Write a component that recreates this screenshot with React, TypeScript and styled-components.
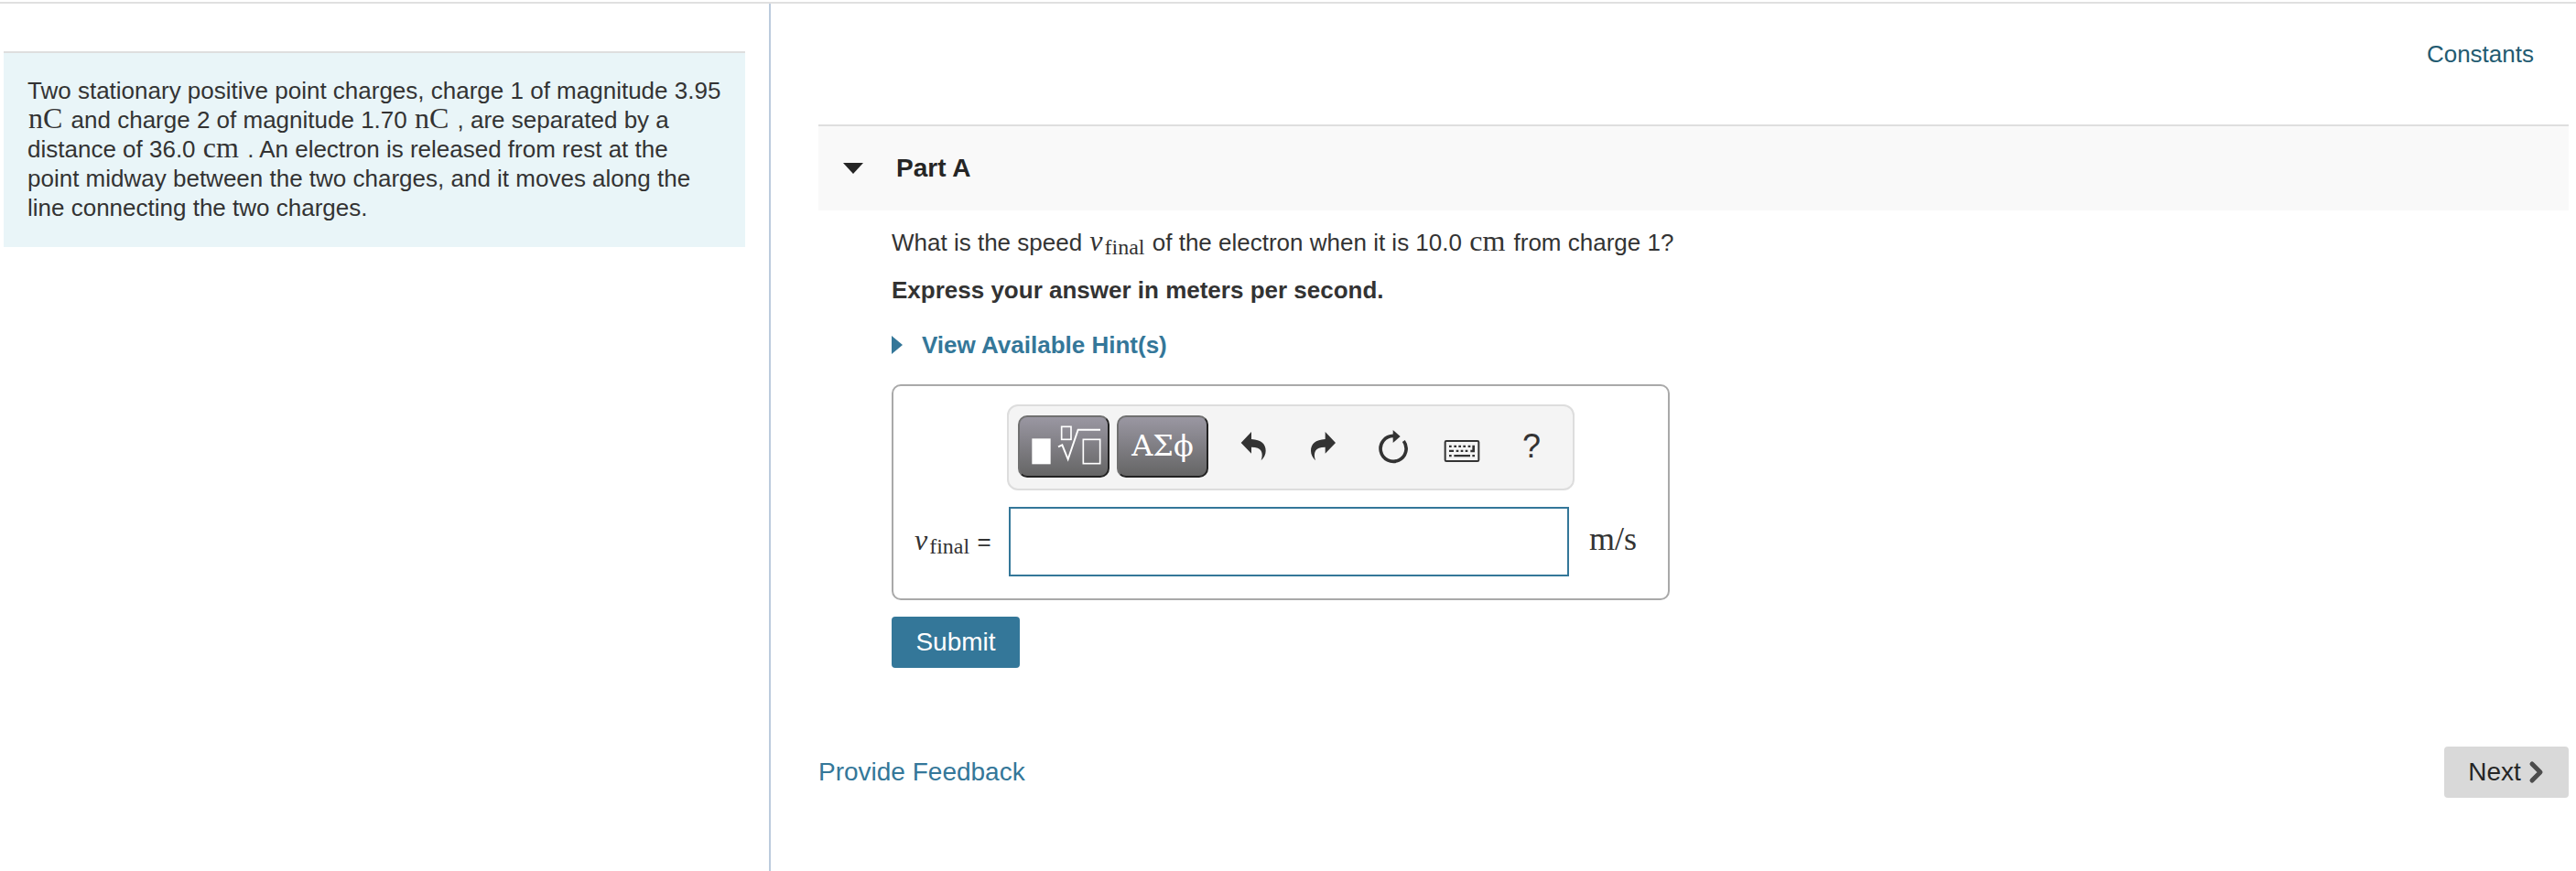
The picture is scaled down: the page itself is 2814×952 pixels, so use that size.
import React from "react";
import styled, { createGlobalStyle } from "styled-components";

const GlobalStyle = createGlobalStyle`
  *, *::before, *::after { box-sizing: border-box; }
  body {
    margin: 0;
    background: #fff;
    color: #333;
    font: 26px/32px "Liberation Sans", Arial, sans-serif;
  }
  p, h2 { margin: 0; }
  button, input { font: inherit; color: inherit; }
`;

const Page = styled.div`
  display: flex;
  min-height: 100vh;
  padding-top: 2px;
`;

const Shell = styled.div`
  display: flex;
  flex: 1;
  border-top: 2px solid #e0e0e0;
`;

const Sidebar = styled.aside`
  flex: 0 0 842px;
  padding: 52px 26px 0 4px;
  border-right: 2px solid #bccbdd;
`;

const Problem = styled.section`
  padding: 25px 24px 27px 26px;
  min-height: 214px;
  border-top: 2px solid #dedede;
  background: #e9f5f8;
`;

const Unit = styled.span<{ $size?: number }>`
  padding: 0 2px 0 1px;
  font-family: "Liberation Serif", "Times New Roman", serif;
  font-size: ${(p) => p.$size ?? 32}px;
  line-height: 24px;
`;

const Variable = styled(Unit)`
  padding: 0 1px;
  sub {
    margin-left: 2px;
    font-size: 24px;
    line-height: 16px;
    vertical-align: -4px;
  }
`;

const Main = styled.main`
  flex: 1;
  min-width: 0;
  padding: 39px 8px 0 52px;
`;

const TopBar = styled.nav`
  display: flex;
  justify-content: flex-end;
  padding: 0 38px 61px 0;
`;

const Link = styled.a<{ $size?: number; $dark?: boolean }>`
  font-size: ${(p) => p.$size ?? 26}px;
  color: ${(p) => (p.$dark ? "#235b71" : "#347799")};
  text-decoration: none;
`;

const PartHeader = styled.header`
  display: flex;
  align-items: center;
  height: 94px;
  border-top: 2px solid #dedede;
  background: #f9f9f9;
`;

const PartToggle = styled.button`
  display: flex;
  align-items: center;
  gap: 36px;
  padding: 0 27px;
  border: 0;
  background: none;
  color: #252525;
  font-size: 28px;
  font-weight: bold;
`;

const PartBody = styled.div`
  padding: 19px 0 0 80px;
`;

const Question = styled.p`
  margin-bottom: 20px;
`;

const Instruction = styled.p`
  margin-bottom: 28px;
  font-weight: bold;
`;

const HintToggle = styled.button`
  display: flex;
  align-items: center;
  gap: 21px;
  margin-bottom: 27px;
  padding: 0;
  border: 0;
  background: none;
  color: #347799;
  font-weight: bold;
`;

const AnswerBox = styled.form`
  display: grid;
  grid-template-columns: 104px 612px auto;
  align-items: center;
  row-gap: 18px;
  width: 850px;
  padding: 20px 20px 24px 22px;
  border: 2px solid #a9a9a9;
  border-radius: 10px;
`;

const Toolbar = styled.div`
  grid-column: 2 / 4;
  justify-self: start;
  display: flex;
  align-items: center;
  width: 620px;
  height: 94px;
  margin-left: -2px;
  padding: 0 0 2px 10px;
  border: 2px solid #ddd;
  border-radius: 12px;
  background: #f4f4f4;
`;

const PaletteButton = styled.button`
  display: flex;
  flex: none;
  align-items: center;
  justify-content: center;
  width: 100px;
  height: 68px;
  margin-right: 8px;
  padding: 0 0 2px;
  border: 2px solid;
  border-color: #707070 #222 #222 #707070;
  border-radius: 10px;
  background: linear-gradient(#9a97a2, #656565);
  color: #fff;
  font-family: "DejaVu Serif", serif;
  font-size: 32px;
`;

const IconGroup = styled.div`
  display: flex;
  padding-left: 3px;
`;

const IconButton = styled.button`
  display: flex;
  flex: none;
  align-items: center;
  justify-content: center;
  width: 76px;
  height: 68px;
  padding: 0;
  border: 0;
  background: none;
  color: #333;
  font-size: 36px;
`;

const AnswerLabel = styled.label`
  white-space: nowrap;
`;

const AnswerInput = styled.input`
  width: 612px;
  height: 76px;
  padding: 0 12px;
  border: 2px solid #347799;
  border-radius: 0;
  background: #fff;
  outline: 0;
`;

const UnitSuffix = styled.div`
  padding-left: 21px;
`;

const SubmitButton = styled.button`
  display: block;
  width: 140px;
  height: 56px;
  margin-top: 18px;
  padding: 0;
  border: 0;
  border-radius: 4px;
  background: #347799;
  color: #fff;
  font-size: 28px;
`;

const Footer = styled.footer`
  display: flex;
  align-items: center;
  justify-content: space-between;
  padding-top: 86px;
`;

const NextButton = styled.button`
  display: flex;
  align-items: center;
  justify-content: center;
  gap: 8px;
  width: 136px;
  height: 56px;
  padding: 0;
  border: 0;
  border-radius: 4px;
  background: #d9d9d9;
  color: #252525;
  font-size: 28px;
`;

const Icon = ({ children }: { children: React.ReactNode }) => (
  <svg width="40" height="40" viewBox="0 0 120 120" fill="currentColor" aria-hidden="true">
    {children}
  </svg>
);

const UNDO_PATH =
  "M20 48 L54 12 V36 C86 38 101 52 101 74 C101 86 95 97 86 106 C94 80 88 62 54 62 V83 Z";

const TemplateIcon = () => (
  <svg width="82" height="44" viewBox="0 0 246 132" fill="none" stroke="#fff" strokeWidth="5" aria-hidden="true">
    <rect x="19" y="43" width="61" height="84" fill="#fff" stroke="none" />
    <rect x="116" y="4" width="31" height="42" />
    <path d="M105 70 L118 64 L137 111 L170 14 H243" strokeWidth="6" />
    <rect x="187" y="46" width="55" height="79" />
  </svg>
);

const VFinal = () => (
  <Variable>
    <i>v</i>
    <sub>final</sub>
  </Variable>
);

export default function App() {
  return (
    <>
      <GlobalStyle />
      <Page>
        <Shell>
          <Sidebar>
            <Problem>
              <p>
                Two stationary positive point charges, charge 1 of magnitude 3.95{" "}
                <Unit>nC</Unit> and charge 2 of magnitude 1.70 <Unit>nC</Unit> , are separated by a
                distance of 36.0 <Unit>cm</Unit> . An electron is released from rest at the point
                midway between the two charges, and it moves along the line connecting the two
                charges.
              </p>
            </Problem>
          </Sidebar>
          <Main>
            <TopBar>
              <Link href="#constants" $dark>Constants</Link>
            </TopBar>
            <PartHeader>
              <h2>
                <PartToggle type="button" aria-expanded="true">
                  <svg width="22" height="12" viewBox="0 0 22 12" fill="currentColor" aria-hidden="true">
                    <path d="M0 0 H22 L11 12 Z" />
                  </svg>
                  Part A
                </PartToggle>
              </h2>
            </PartHeader>
            <PartBody>
              <Question>
                What is the speed <VFinal /> of the electron when it is 10.0 <Unit>cm</Unit> from
                charge 1?
              </Question>
              <Instruction>Express your answer in meters per second.</Instruction>
              <HintToggle type="button" aria-expanded="false">
                <svg width="12" height="20" viewBox="0 0 12 20" fill="currentColor" aria-hidden="true">
                  <path d="M0 0 L12 10 L0 20 Z" />
                </svg>
                View Available Hint(s)
              </HintToggle>
              <AnswerBox id="answer-form" onSubmit={(e) => e.preventDefault()}>
                <Toolbar role="toolbar" aria-label="Equation editor">
                  <PaletteButton type="button" aria-label="Templates">
                    <TemplateIcon />
                  </PaletteButton>
                  <PaletteButton type="button">ΑΣϕ</PaletteButton>
                  <IconGroup>
                    <IconButton type="button" aria-label="Undo">
                      <Icon><path d={UNDO_PATH} /></Icon>
                    </IconButton>
                    <IconButton type="button" aria-label="Redo">
                      <Icon><path d={UNDO_PATH} transform="translate(122 0) scale(-1 1)" /></Icon>
                    </IconButton>
                    <IconButton type="button" aria-label="Reset">
                      <Icon>
                        <path d="M97 42 A42 42 0 1 1 63 25" fill="none" stroke="currentColor" strokeWidth="11" />
                        <path d="M62 6 L86 27 L62 48 Z" />
                      </Icon>
                    </IconButton>
                    <IconButton type="button" aria-label="Keyboard shortcuts">
                      <Icon>
                        <rect x="5" y="42" width="110" height="66" rx="4" fill="none" stroke="currentColor" strokeWidth="6" />
                        <path d="M18 56h8v7h-8z M34 56h8v7h-8z M49 56h8v7h-8z M64 56h8v7h-8z M80 56h8v7h-8z M94 56h8v23h-14v-8h6z M18 71h15v7h-15z M41 71h8v7h-8z M56 71h8v7h-8z M71 71h8v7h-8z M18 87h8v7h-8z M34 87h53v7h-53z M94 87h8v7h-8z" />
                      </Icon>
                    </IconButton>
                    <IconButton type="button" aria-label="Help">?</IconButton>
                  </IconGroup>
                </Toolbar>
                <AnswerLabel htmlFor="answer">
                  <VFinal /> =
                </AnswerLabel>
                <AnswerInput id="answer" type="text" />
                <UnitSuffix>
                  <Unit $size={36}>m/s</Unit>
                </UnitSuffix>
              </AnswerBox>
              <SubmitButton type="submit" form="answer-form">Submit</SubmitButton>
            </PartBody>
            <Footer>
              <Link href="#feedback" $size={28}>Provide Feedback</Link>
              <NextButton type="button">
                Next
                <svg width="18" height="26" viewBox="0 0 18 26" fill="none" stroke="#4d4d4d" strokeWidth="5" strokeLinecap="round" strokeLinejoin="round" aria-hidden="true">
                  <path d="M4 4 L13 13 L4 22" />
                </svg>
              </NextButton>
            </Footer>
          </Main>
        </Shell>
      </Page>
    </>
  );
}
